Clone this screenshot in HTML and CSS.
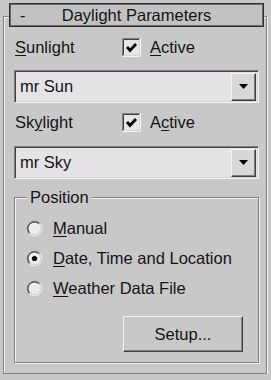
FILE: index.html
```html
<!DOCTYPE html>
<html lang="en">
<head>
  <meta charset="UTF-8" />
  <title>Daylight Parameters</title>
  <link rel="stylesheet" href="styles.css">
</head>
<body>
  <div class="panel">
    <div class="title">
      <span class="minus">-</span>
      <span class="title-text">Daylight Parameters</span>
    </div>

    <div class="row">
      <span class="label"><u>S</u>unlight</span>
      <span class="check">
        <svg width="19" height="19" viewBox="0 0 19 19">
          <rect x="2" y="2" width="15" height="15" fill="#e6e6e6"/>
          <path d="M0.5 18V0.5H18" stroke="#808080" fill="none"/>
          <path d="M1.5 17V1.5H17" stroke="#404040" fill="none"/>
          <path d="M0 18.5H18.5V0" stroke="#f4f4f4" fill="none"/>
          <path d="M1 17.5H17.5V1" stroke="#d4d4d4" fill="none"/>
          <path d="M5 9L8 12.5L14 6" stroke="#000" stroke-width="2.8" fill="none"/>
        </svg>
        <span><u>A</u>ctive</span>
      </span>
    </div>

    <div class="dropdown">
      <span class="value">mr Sun</span>
      <span class="arrow-btn">
        <svg width="9" height="5" viewBox="0 0 9 5"><path d="M0 0H9L4.5 5Z" fill="#000"/></svg>
      </span>
    </div>

    <div class="row row-sky">
      <span class="label">Sk<u>y</u>light</span>
      <span class="check">
        <svg width="19" height="19" viewBox="0 0 19 19">
          <rect x="2" y="2" width="15" height="15" fill="#e6e6e6"/>
          <path d="M0.5 18V0.5H18" stroke="#808080" fill="none"/>
          <path d="M1.5 17V1.5H17" stroke="#404040" fill="none"/>
          <path d="M0 18.5H18.5V0" stroke="#f4f4f4" fill="none"/>
          <path d="M1 17.5H17.5V1" stroke="#d4d4d4" fill="none"/>
          <path d="M5 9L8 12.5L14 6" stroke="#000" stroke-width="2.8" fill="none"/>
        </svg>
        <span>A<u>c</u>tive</span>
      </span>
    </div>

    <div class="dropdown dropdown-sky">
      <span class="value">mr Sky</span>
      <span class="arrow-btn">
        <svg width="9" height="5" viewBox="0 0 9 5"><path d="M0 0H9L4.5 5Z" fill="#000"/></svg>
      </span>
    </div>

    <fieldset class="group">
      <legend>Position</legend>

      <div class="radio radio-first">
        <svg width="17" height="17" viewBox="0 0 17 17">
          <circle cx="8.5" cy="8.5" r="6" fill="#ececec"/>
          <path d="M3.2 13.8A7.5 7.5 0 0 1 13.8 3.2" stroke="#808080" fill="none"/>
          <path d="M13.8 3.2A7.5 7.5 0 0 1 3.2 13.8" stroke="#f4f4f4" fill="none"/>
          <path d="M3.9 13.1A6.5 6.5 0 0 1 13.1 3.9" stroke="#404040" fill="none"/>
          <path d="M13.1 3.9A6.5 6.5 0 0 1 3.9 13.1" stroke="#d4d4d4" fill="none"/>
        </svg>
        <span><u>M</u>anual</span>
      </div>

      <div class="radio">
        <svg width="17" height="17" viewBox="0 0 17 17">
          <circle cx="8.5" cy="8.5" r="6" fill="#ececec"/>
          <path d="M3.2 13.8A7.5 7.5 0 0 1 13.8 3.2" stroke="#808080" fill="none"/>
          <path d="M13.8 3.2A7.5 7.5 0 0 1 3.2 13.8" stroke="#f4f4f4" fill="none"/>
          <path d="M3.9 13.1A6.5 6.5 0 0 1 13.1 3.9" stroke="#404040" fill="none"/>
          <path d="M13.1 3.9A6.5 6.5 0 0 1 3.9 13.1" stroke="#d4d4d4" fill="none"/>
          <circle cx="8.5" cy="8.5" r="2.6" fill="#000"/>
        </svg>
        <span><u>D</u>ate, Time and Location</span>
      </div>

      <div class="radio">
        <svg width="17" height="17" viewBox="0 0 17 17">
          <circle cx="8.5" cy="8.5" r="6" fill="#ececec"/>
          <path d="M3.2 13.8A7.5 7.5 0 0 1 13.8 3.2" stroke="#808080" fill="none"/>
          <path d="M13.8 3.2A7.5 7.5 0 0 1 3.2 13.8" stroke="#f4f4f4" fill="none"/>
          <path d="M3.9 13.1A6.5 6.5 0 0 1 13.1 3.9" stroke="#404040" fill="none"/>
          <path d="M13.1 3.9A6.5 6.5 0 0 1 3.9 13.1" stroke="#d4d4d4" fill="none"/>
        </svg>
        <span><u>W</u>eather Data File</span>
      </div>

      <div class="actions">
        <button class="btn">Setup...</button>
      </div>
    </fieldset>
  </div>
</body>
</html>
```

FILE: styles.css
```css
body {
  margin: 0;
  background: #c8c8c8;
  font-family: "Liberation Sans", Arial, sans-serif;
  font-size: 16.5px;
  color: #141414;
}
u {
  text-underline-offset: 2px;
}
.panel {
  box-sizing: border-box;
  height: 358px;
  margin: 16px 4px 0 3px;
  padding: 0 7px 0 10px;
  border: 1px solid #808080;
  box-shadow: inset 1px 1px 0 #f4f4f4, 1px 1px 0 #f4f4f4;
}
.title {
  box-sizing: border-box;
  display: grid;
  grid-template-columns: 1fr auto 1fr;
  align-items: center;
  height: 24px;
  margin: -14px -5px 0 -5px;
  padding: 0 8px;
  background: #c2c2c2;
  border: 1px solid #2e2e2e;
  box-shadow: inset 1px 1px 0 #6a6a6a, inset -1px -1px 0 #6a6a6a;
}
.minus {
  justify-self: start;
  padding-left: 2px;
}
.row {
  display: flex;
  align-items: center;
  height: 19px;
  margin-top: 11px;
}
.row-sky {
  margin-top: 10px;
}
.label {
  width: 108px;
  padding-left: 1px;
  box-sizing: border-box;
}
.check {
  display: flex;
  align-items: center;
  gap: 9px;
}
.check svg {
  display: block;
}
.dropdown {
  box-sizing: border-box;
  display: flex;
  align-items: center;
  justify-content: space-between;
  height: 33px;
  margin-top: 13px;
  padding: 0 0 0 3px;
  background: #e5e3e5;
  border-top: 1px solid #808080;
  border-left: 1px solid #808080;
  border-right: 1px solid #f4f4f4;
  border-bottom: 1px solid #f4f4f4;
  box-shadow: inset 1px 1px 0 #404040, inset -1px -1px 0 #d4d4d4;
}
.dropdown-sky {
  margin-top: 14px;
}
.value {
  padding-left: 2px;
}
.arrow-btn {
  box-sizing: border-box;
  display: flex;
  align-items: center;
  justify-content: center;
  width: 25px;
  height: 28px;
  margin-right: 2px;
  background: #dad8d6;
  border-top: 1px solid #f4f4f4;
  border-left: 1px solid #f4f4f4;
  border-right: 1px solid #404040;
  border-bottom: 1px solid #404040;
  box-shadow: inset -1px -1px 0 #808080;
}
.arrow-btn svg {
  display: block;
}
.group {
  box-sizing: border-box;
  margin: 9px 0 0 0;
  padding: 0 0 10px 11px;
  min-width: 0;
  border: 1px solid #808080;
  box-shadow: inset 1px 1px 0 #f4f4f4, 1px 1px 0 #f4f4f4;
}
.group legend {
  margin-left: 1px;
  padding: 0 3px;
  line-height: 19px;
  background: #c8c8c8;
}
.radio {
  display: flex;
  align-items: center;
  gap: 10px;
  height: 30px;
}
.radio-first {
  margin-top: 6px;
}
.radio svg {
  display: block;
}
.actions {
  display: flex;
  justify-content: flex-end;
  padding-right: 15px;
  margin-top: 13px;
}
.btn {
  box-sizing: border-box;
  width: 120px;
  height: 36px;
  font: inherit;
  color: #141414;
  background: #c8c8c8;
  border-top: 1px solid #f4f4f4;
  border-left: 1px solid #f4f4f4;
  border-right: 1px solid #404040;
  border-bottom: 1px solid #404040;
  box-shadow: inset -1px -1px 0 #808080;
  padding: 0;
}
```
